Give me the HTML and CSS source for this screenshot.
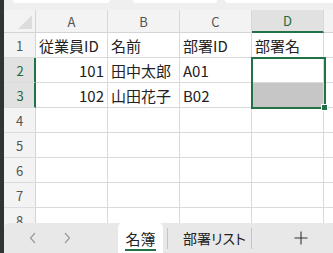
FILE: index.html
```html
<!DOCTYPE html>
<html lang="ja">
<head>
    <meta charset="UTF-8">
    <meta name="viewport" content="width=device-width, initial-scale=1.0">
    <title>名簿</title>
    <link rel="stylesheet" href="styles.css">
</head>
<body>
    <div class="window">
        <div class="edge"></div>
        <div class="main">
            <div class="topbar">
                <span class="pill pill-name"></span>
                <span class="pill pill-fx"></span>
                <span class="pill pill-formula"></span>
            </div>

            <div class="sheet">
                <div class="grid">
                    <div class="corner"><span class="corner-mark"></span></div>
                    <div class="colhead">A</div>
                    <div class="colhead">B</div>
                    <div class="colhead">C</div>
                    <div class="colhead colhead-sel">D</div>
                    <div class="colhead colhead-rest"></div>

                    <div class="rowhead">1</div>
                    <div class="cell">従業員ID</div>
                    <div class="cell">名前</div>
                    <div class="cell">部署ID</div>
                    <div class="cell">部署名</div>
                    <div class="cell cell-rest"></div>

                    <div class="rowhead rowhead-sel">2</div>
                    <div class="cell num">101</div>
                    <div class="cell">田中太郎</div>
                    <div class="cell">A01</div>
                    <div class="cell"></div>
                    <div class="cell cell-rest"></div>

                    <div class="rowhead rowhead-sel">3</div>
                    <div class="cell num">102</div>
                    <div class="cell">山田花子</div>
                    <div class="cell">B02</div>
                    <div class="cell cell-shade"></div>
                    <div class="cell cell-rest"></div>

                    <div class="rowhead">4</div>
                    <div class="cell"></div><div class="cell"></div><div class="cell"></div><div class="cell"></div><div class="cell cell-rest"></div>

                    <div class="rowhead">5</div>
                    <div class="cell"></div><div class="cell"></div><div class="cell"></div><div class="cell"></div><div class="cell cell-rest"></div>

                    <div class="rowhead">6</div>
                    <div class="cell"></div><div class="cell"></div><div class="cell"></div><div class="cell"></div><div class="cell cell-rest"></div>

                    <div class="rowhead">7</div>
                    <div class="cell"></div><div class="cell"></div><div class="cell"></div><div class="cell"></div><div class="cell cell-rest"></div>

                    <div class="rowhead">8</div>
                    <div class="cell"></div><div class="cell"></div><div class="cell"></div><div class="cell"></div><div class="cell cell-rest"></div>
                </div>

                <!-- selected range D2:D3 -->
                <div class="selection"><span class="handle"></span></div>
            </div>

            <div class="tabs">
                <div class="nav">
                    <svg width="8" height="12" viewBox="0 0 8 12"><path d="M6 1 L1.5 6 L6 11" fill="none" stroke="#9a9a9a" stroke-width="1.2"/></svg>
                    <svg width="8" height="12" viewBox="0 0 8 12"><path d="M2 1 L6.5 6 L2 11" fill="none" stroke="#9a9a9a" stroke-width="1.2"/></svg>
                </div>
                <div class="tab tab-active"><span class="tab-label">名簿</span></div>
                <span class="tab-sep"></span>
                <div class="tab">部署リスト</div>
                <span class="tab-sep"></span>
                <div class="tab-add">
                    <svg width="14" height="14" viewBox="0 0 14 14"><path d="M7 0.5 V13.5 M0.5 7 H13.5" stroke="#333" stroke-width="1.1"/></svg>
                </div>
            </div>
        </div>
    </div>
</body>
</html>
```

FILE: styles.css
```css
body {
    margin: 0;
    padding: 0;
    font-family: "Noto Sans CJK JP", sans-serif;
    color: #222;
    overflow: hidden;
}

.window {
    display: flex;
    width: 333px;
    height: 253px;
    background: #f0f0f0;
}

.edge {
    width: 4px;
    background: #2f3531;
}

.main {
    flex: 1;
    display: flex;
    flex-direction: column;
    min-width: 0;
}

.topbar {
    height: 10px;
    display: flex;
    align-items: flex-start;
    background: #efefef;
}

.pill {
    height: 3px;
    background: #fff;
    border-radius: 0 0 4px 4px;
}

.pill-name { margin-left: 9px; width: 97px; }
.pill-fx { margin-left: 23px; width: 84px; }
.pill-formula { margin-left: 8px; flex: 1; border-radius: 0 0 0 4px; }

.sheet {
    height: 213px;
    position: relative;
    overflow: hidden;
    background: #fff;
}

.grid {
    display: grid;
    grid-template-columns: 32px 72px 72px 72px 72px 1fr;
    grid-template-rows: 23px;
    grid-auto-rows: 25px;
}

.grid > div {
    box-sizing: border-box;
}

.corner {
    background: #f3f3f3;
    border-right: 1px solid #d4d4d4;
    border-bottom: 1px solid #d4d4d4;
    position: relative;
}

.corner-mark {
    position: absolute;
    right: 3px;
    bottom: 3px;
    width: 0;
    height: 0;
    border-left: 14px solid transparent;
    border-bottom: 14px solid #dcdcdc;
}

.colhead {
    background: #f3f3f3;
    border-right: 1px solid #d9d9d9;
    border-bottom: 1px solid #d4d4d4;
    font-size: 13px;
    color: #555;
    display: flex;
    align-items: center;
    justify-content: center;
}

.colhead-sel {
    background: #e1e1e1;
    color: #1e6b41;
    border-bottom: 2px solid #217346;
}

.colhead-rest {
    border-right: none;
}

.rowhead {
    background: #f3f3f3;
    border-right: 1px solid #d4d4d4;
    border-bottom: 1px solid #dcdcdc;
    font-size: 13px;
    color: #555;
    display: flex;
    align-items: center;
    justify-content: center;
}

.rowhead-sel {
    background: #e1e1e1;
    color: #1e6b41;
    border-right: 2px solid #217346;
    padding-left: 2px;
}

.cell {
    border-right: 1px solid #dadada;
    border-bottom: 1px solid #dadada;
    font-size: 15px;
    padding: 0 3px;
    display: flex;
    align-items: center;
    white-space: nowrap;
    overflow: hidden;
}

.num {
    justify-content: flex-end;
}

.cell-shade {
    background: #c6c6c6;
}

.cell-rest {
    border-right: none;
}

.selection {
    position: absolute;
    left: 247px;
    top: 47px;
    width: 75px;
    height: 52px;
    box-sizing: border-box;
    border: 2px solid #217346;
}

.handle {
    position: absolute;
    right: -4px;
    bottom: -4px;
    width: 5px;
    height: 5px;
    background: #217346;
    border: 1px solid #fff;
}

.tabs {
    height: 30px;
    background: #e8e8e8;
    border-radius: 6px 0 0 0;
    display: flex;
    align-items: stretch;
    font-size: 14px;
    color: #222;
    font-feature-settings: "palt";
}

.nav {
    display: flex;
    align-items: center;
    gap: 26px;
    padding-left: 25px;
    width: 89px;
}

.tab {
    display: flex;
    align-items: center;
    padding: 0 1px 0 15px;
    white-space: nowrap;
}

.tab-active {
    background: #fff;
    border-radius: 6px 6px 0 0;
    margin-top: -1px;
    width: 45px;
    padding: 0;
    justify-content: center;
    font-size: 15px;
}

.tab-label {
    border-bottom: 2px solid #217346;
    line-height: 20px;
    padding-top: 4px;
}

.tab-sep {
    width: 1px;
    background: #c4c4c4;
    margin: 5px 0 4px 4px;
}

.tab-add {
    flex: 1;
    display: flex;
    align-items: center;
    padding-left: 42px;
}
```
